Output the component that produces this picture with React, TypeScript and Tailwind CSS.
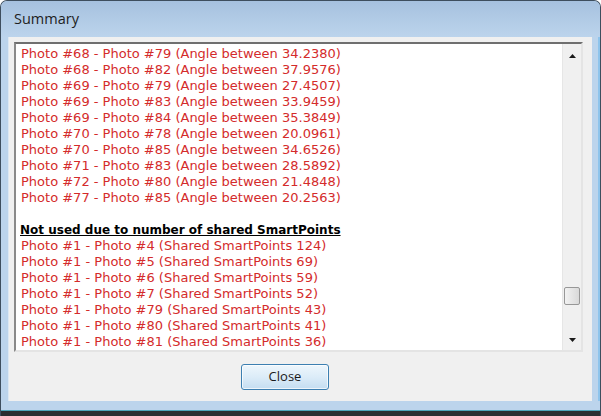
const angles = [
  ["68", "79", "34.2380"],
  ["68", "82", "37.9576"],
  ["69", "79", "27.4507"],
  ["69", "83", "33.9459"],
  ["69", "84", "35.3849"],
  ["70", "78", "20.0961"],
  ["70", "85", "34.6526"],
  ["71", "83", "28.5892"],
  ["72", "80", "21.4848"],
  ["77", "85", "20.2563"],
];

const shared = [
  ["4", "124"],
  ["5", "69"],
  ["6", "59"],
  ["7", "52"],
  ["79", "43"],
  ["80", "41"],
  ["81", "36"],
  ["82", "35"],
];

function Arrow({ down }: { down?: boolean }) {
  return (
    <svg width="7" height="4" viewBox="0 0 7 4" className="block">
      {down ? <path d="M0 0h7L3.5 4z" fill="#1a1a1a" /> : <path d="M0 4h7L3.5 0z" fill="#1a1a1a" />}
    </svg>
  );
}

function ScrollBar() {
  return (
    <div className="flex h-full w-[19px] flex-col bg-[#f0f0f0] border-l border-[#e6e6e6]">
      <div className="flex h-[17px] items-center justify-center pt-[6px]">
        <Arrow />
      </div>
      <div className="flex flex-1 flex-col">
        <div className="mt-[226px] mx-[1px] h-[18px] rounded-[2px] border border-[#979797] bg-gradient-to-r from-[#f2f2f2] to-[#d9d9d9]" />
      </div>
      <div className="flex h-[17px] items-center justify-center pb-[4px]">
        <Arrow down />
      </div>
    </div>
  );
}

export default function App() {
  return (
    <div className="flex h-[416px] w-[601px] flex-col overflow-hidden rounded-t-[7px] border-t border-l border-r border-[#3e4e5e] bg-[#bcd4ec]">
      {/* title bar */}
      <div className="flex h-[36px] shrink-0 items-center bg-gradient-to-b from-[#a6c1df] to-[#bcd4ec] pl-[13px] pb-[1px]">
        <span className="text-[14.5px] text-[#1e1e1e]" style={{ fontFamily: '"Open Sans", sans-serif' }}>
          Summary
        </span>
      </div>

      <div className="flex h-[364px] shrink-0">
        <div className="w-[7px] shrink-0" />
        <div className="flex w-[584px] shrink-0 flex-col bg-[#f0f0f0] border-l border-[#dde8f3] pl-[5px] pt-[5px]">
          {/* text box */}
          <div className="flex h-[310px] w-[569px] border-2 border-t-[#6f6f6f] border-l-[#8a8a8a] border-r-[#e4e4e4] border-b-[#e4e4e4] bg-white">
            <div
              className="flex-1 overflow-hidden pl-[5px] pt-[2px] text-[13px] leading-[16px] text-[#d42b2b]"
              style={{ fontFamily: '"DejaVu Sans", Verdana, sans-serif' }}
            >
              {angles.map(([a, b, v]) => (
                <div key={a + b} className="whitespace-nowrap">
                  Photo #{a} - Photo #{b} (Angle between {v})
                </div>
              ))}
              <div className="h-[16px]" />
              <div className="whitespace-nowrap font-bold text-[12px] text-black underline -ml-[1px]">
                Not used due to number of shared SmartPoints
              </div>
              {shared.map(([b, n]) => (
                <div key={b} className="whitespace-nowrap">
                  Photo #1 - Photo #{b} (Shared SmartPoints {n})
                </div>
              ))}
            </div>
            <ScrollBar />
          </div>

          <div className="mt-[12px] ml-[227px]">
            <button
              className="flex h-[26px] w-[88px] items-center justify-center rounded-[3px] border border-[#3c7fb1] bg-gradient-to-b from-[#eef6fc] via-[#dcecf8] to-[#c4ddf1] text-[13px] text-[#1a1a1a] shadow-[inset_0_0_0_1px_rgba(255,255,255,0.7)]"
              style={{ fontFamily: '"Open Sans", sans-serif' }}
            >
              Close
            </button>
          </div>
        </div>
        <div className="flex-1 border-r-2 border-[#8ec4ec]" />
      </div>

      <div className="flex-1 flex flex-col">
        <div className="flex-1" />
        <div className="h-[1px] bg-[#4aa3b8]" />
        <div className="h-[5px] bg-[#2a2d30]" />
      </div>
    </div>
  );
}
